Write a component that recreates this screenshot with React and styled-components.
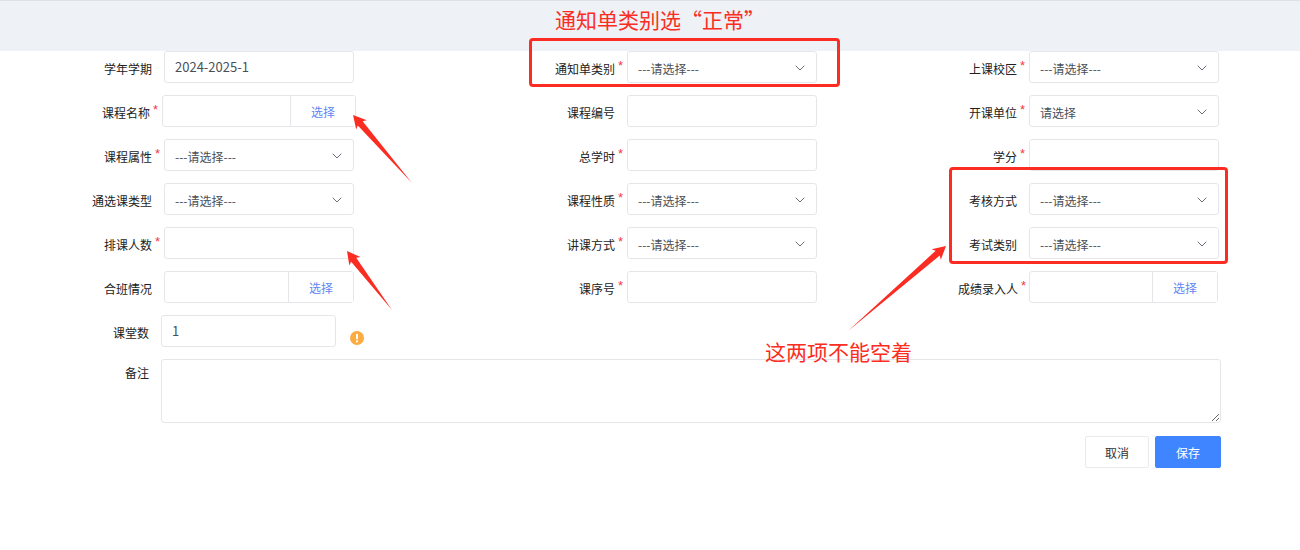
import React from "react";
import styled, { createGlobalStyle } from "styled-components";
import { ChevronDown } from "lucide-react";

const FONT = `"Noto Sans CJK SC", "Noto Sans", sans-serif`;

const Global = createGlobalStyle`
  html, body { margin: 0; padding: 0; background: #fff; }
  * { box-sizing: border-box; }
  body { font-family: ${FONT}; font-size: 12px; color: #333; }
`;

const Page = styled.div`
  position: relative;
  width: 1300px;
  height: 550px;
  overflow: hidden;
  background: #fff;
`;
const TopBar = styled.div`
  height: 51px;
  background: #eef1f5;
  border-top: 1px solid #dfe1e4;
`;
const Grid = styled.div`
  display: grid;
  grid-template-columns: 354px 463px 402px;
  grid-auto-rows: 32px;
  row-gap: 12px;
`;
const Cell = styled.div`
  display: flex;
  justify-content: flex-end;
  align-items: center;
`;
const Label = styled.label`
  position: relative;
  padding: 4px ${(p) => p.$gap ?? 12}px 0 0;
  font-size: 12px;
  line-height: 16px;
  color: #222;
  white-space: nowrap;
  text-align: right;
`;
const Star = styled.span`
  position: absolute;
  right: ${(p) => (p.$gap ?? 12) - 8}px;
  top: 2px;
  font-family: "Liberation Sans", sans-serif;
  font-size: 13px;
  line-height: 14px;
  color: #f0394a;
`;
const Control = styled.div`
  display: flex;
  align-items: center;
  width: ${(p) => p.$width ?? 190}px;
  height: 32px;
  margin-right: ${(p) => p.$outset ?? 0}px;
  background: #fff;
  border: 1px solid #e4e6ea;
  border-radius: 3px;
`;
const Input = styled.input`
  flex: 1;
  min-width: 0;
  height: 30px;
  padding: 0 10px 2px;
  border: 0;
  outline: 0;
  background: transparent;
  font-family: ${FONT};
  font-size: 13px;
  color: #4a4f57;
`;
const SelectValue = styled.span`
  flex: 1;
  padding: 3px 0 0 10px;
  font-size: 12px;
  line-height: 16px;
  color: #4a4f57;
`;
const Chevron = styled(ChevronDown)`
  margin: 1px 8px 0 0;
  color: #66707c;
`;
const Pick = styled.button`
  width: 65px;
  height: 30px;
  padding: 0;
  border: 0;
  border-left: 1px solid #e4e6ea;
  background: #fff;
  font-family: ${FONT};
  font-size: 12px;
  color: #5f86f2;
`;
const WideRow = styled.div`
  display: flex;
  align-items: ${(p) => (p.$top ? "flex-start" : "center")};
  margin-top: 12px;
`;
const WideLabel = styled.label`
  width: 149px;
  margin-right: 12px;
  padding-top: ${(p) => (p.$top ? 6 : 4)}px;
  font-size: 12px;
  line-height: 16px;
  color: #222;
  text-align: right;
`;
const Hint = styled.span`
  display: flex;
  margin: 14px 0 0 14px;
`;
const Textarea = styled.textarea`
  display: block;
  width: 1060px;
  height: 64px;
  padding: 6px 10px;
  border: 1px solid #e4e6ea;
  border-radius: 3px;
  outline: 0;
  font-family: ${FONT};
  font-size: 12px;
`;
const Actions = styled.div`
  display: flex;
  justify-content: flex-end;
  gap: 6px;
  width: 1221px;
  margin-top: 13px;
`;
const Button = styled.button`
  width: ${(p) => (p.$primary ? 66 : 64)}px;
  height: 32px;
  padding: 0;
  border: 1px solid ${(p) => (p.$primary ? "#3f85ff" : "#e8eaed")};
  border-radius: 2px;
  background: ${(p) => (p.$primary ? "#3f85ff" : "#fff")};
  font-family: ${FONT};
  font-size: 12px;
  color: ${(p) => (p.$primary ? "#fff" : "#333")};
`;
const Note = styled.div`
  position: absolute;
  left: ${(p) => p.$x}px;
  top: ${(p) => p.$y}px;
  font-size: 21px;
  line-height: 28px;
  color: #fb2d22;
  white-space: nowrap;
`;
const RedBox = styled.div`
  position: absolute;
  left: ${(p) => p.$x}px;
  top: ${(p) => p.$y}px;
  width: ${(p) => p.$w}px;
  height: ${(p) => p.$h}px;
  border: 3px solid #fb2d22;
  border-radius: 4px;
`;
const Overlay = styled.svg`
  position: absolute;
  inset: 0;
  pointer-events: none;
`;

function Field({ label, required, gap, children }) {
  return (
    <Cell>
      <Label $gap={gap}>
        {label}
        {required && <Star $gap={gap}>*</Star>}
      </Label>
      {children}
    </Cell>
  );
}

const TextField = ({ label, required, value }) => (
  <Field label={label} required={required}>
    <Control>
      <Input defaultValue={value} />
    </Control>
  </Field>
);

const SelectField = ({ label, required, value = "---请选择---" }) => (
  <Field label={label} required={required}>
    <Control>
      <SelectValue>{value}</SelectValue>
      <Chevron size={16} strokeWidth={1.5} />
    </Control>
  </Field>
);

const PickField = ({ label, required, width, outset, gap }) => (
  <Field label={label} required={required} gap={gap}>
    <Control $width={width} $outset={outset}>
      <Input />
      <Pick type="button">选择</Pick>
    </Control>
  </Field>
);

function Arrow({ tip, tail }) {
  const [tx, ty] = tip;
  const [bx, by] = tail;
  const len = Math.hypot(bx - tx, by - ty);
  const ux = (bx - tx) / len;
  const uy = (by - ty) / len;
  const nx = -uy;
  const ny = ux;
  const at = (d, w) => `${tx + ux * d + nx * w},${ty + uy * d + ny * w}`;
  const points = [at(0, 0), at(13, 7), at(11, 3.2), at(len, 0), at(11, -3.2), at(13, -7)].join(" ");
  return <polygon points={points} fill="#fb2d22" />;
}

export default function App() {
  return (
    <Page>
      <Global />
      <TopBar />
      <Grid>
        <TextField label="学年学期" value="2024-2025-1" />
        <SelectField label="通知单类别" required />
        <SelectField label="上课校区" required />

        <PickField label="课程名称" required width={194} outset={-2} />
        <TextField label="课程编号" />
        <SelectField label="开课单位" required value="请选择" />

        <SelectField label="课程属性" required />
        <TextField label="总学时" required />
        <TextField label="学分" required />

        <SelectField label="通选课类型" />
        <SelectField label="课程性质" required />
        <SelectField label="考核方式" />

        <TextField label="排课人数" required />
        <SelectField label="讲课方式" required />
        <SelectField label="考试类别" />

        <PickField label="合班情况" />
        <TextField label="课序号" required />
        <PickField label="成绩录入人" required width={189} outset={1} gap={11} />
      </Grid>

      <WideRow>
        <WideLabel>课堂数</WideLabel>
        <Control $width={175}>
          <Input defaultValue="1" />
        </Control>
        <Hint>
          <svg width="14" height="14" viewBox="0 0 14 14">
            <circle cx="7" cy="7" r="7" fill="#fbab3f" />
            <rect x="6" y="2.8" width="2" height="5.6" rx="1" fill="#fff" />
            <circle cx="7" cy="10.4" r="1.1" fill="#fff" />
          </svg>
        </Hint>
      </WideRow>

      <WideRow $top>
        <WideLabel $top>备注</WideLabel>
        <Textarea />
      </WideRow>

      <Actions>
        <Button type="button">取消</Button>
        <Button type="button" $primary>保存</Button>
      </Actions>

      <Note $x={555} $y={5}>通知单类别选“正常”</Note>
      <Note $x={765} $y={337}>这两项不能空着</Note>
      <RedBox $x={529} $y={38} $w={311} $h={49} />
      <RedBox $x={949} $y={167} $w={279} $h={97} />
      <Overlay width="1300" height="550" viewBox="0 0 1300 550">
        <Arrow tip={[353, 115]} tail={[412, 183]} />
        <Arrow tip={[347, 251]} tail={[392, 310]} />
        <Arrow tip={[946, 246]} tail={[848, 331]} />
      </Overlay>
    </Page>
  );
}
